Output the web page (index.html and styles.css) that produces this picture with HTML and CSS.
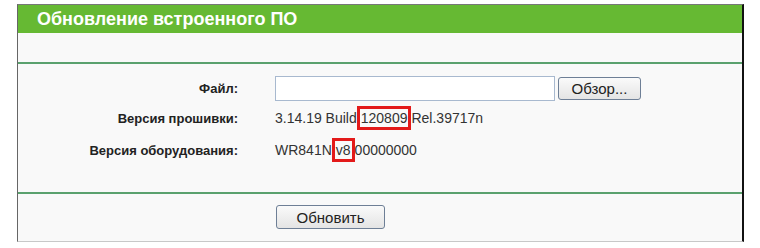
FILE: index.html
```html
<!DOCTYPE html>
<html lang="ru">
<head>
    <meta charset="UTF-8">
    <title>Обновление встроенного ПО</title>
    <link rel="stylesheet" href="styles.css">
</head>
<body>
    <div class="frame">
        <div class="title">Обновление встроенного ПО</div>
        <div class="blank"></div>
        <div class="rows">
            <div class="row row-file">
                <div class="label">Файл:</div>
                <div class="value">
                    <input type="text" class="file-input">
                    <button class="btn btn-browse">Обзор...</button>
                </div>
            </div>
            <div class="row">
                <div class="label">Версия прошивки:</div>
                <div class="value">3.14.19 Build<span class="mark">120809</span>Rel.39717n</div>
            </div>
            <div class="row">
                <div class="label">Версия оборудования:</div>
                <div class="value">WR841N<span class="mark">v8</span>00000000</div>
            </div>
        </div>
        <div class="actions">
            <button class="btn btn-update">Обновить</button>
        </div>
    </div>
</body>
</html>
```

FILE: styles.css
```css
body {
    margin: 0;
    background: #fff;
    font-family: "Liberation Sans", Arial, sans-serif;
    font-size: 14px;
    color: #333;
}

.frame {
    margin: 4px 0 0 17px;
    width: 724px;
    background: #f9f9f9;
    border-top: 1px solid #777;
    border-left: 1px solid #666;
    border-right: 2px solid #111;
    border-bottom: 1px solid #c8c8c8;
}

.title {
    height: 28px;
    line-height: 28px;
    background: #66b933;
    color: #fff;
    font-size: 18px;
    font-weight: bold;
    padding-left: 19px;
}

.blank {
    height: 29px;
    border-bottom: 2px solid #5aa16e;
}

.rows {
    padding: 10px 0 26px;
    border-bottom: 2px solid #5aa16e;
}

.row {
    display: flex;
    align-items: center;
    height: 32px;
}

.row-file {
    height: 28px;
}

.label {
    width: 220px;
    text-align: right;
    font-size: 13px;
    font-weight: bold;
    color: #222;
}

.value {
    margin-left: 37px;
    display: flex;
    align-items: center;
    white-space: pre;
}

.file-input {
    box-sizing: border-box;
    width: 280px;
    height: 25px;
    margin: 0;
    padding: 0 3px;
    border: 1px solid #a8b9cf;
    background: #fff;
}

.btn {
    font-family: "Liberation Sans", Arial, sans-serif;
    font-size: 15px;
    color: #222;
    background: linear-gradient(#fafafa, #e4e4e4);
    border: 1px solid #6e7f96;
    border-radius: 3px;
    padding: 0;
    height: 23px;
}

.btn-browse {
    width: 83px;
    margin-left: 3px;
}

.mark {
    outline: 3px solid #e31a1a;
    outline-offset: -1px;
    padding: 2px 2px;
    margin: 0 2px;
}

.actions {
    padding: 11px 0 12px 258px;
}

.btn-update {
    width: 109px;
    height: 24px;
}
```
